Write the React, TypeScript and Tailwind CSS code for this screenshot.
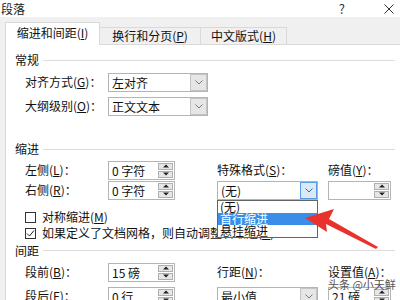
import React from 'react';

const Acc = ({ k }: { k: string }) => (
  <span>
    (<span className="underline underline-offset-1">{k}</span>)
  </span>
);

const Label = ({ text, k }: { text: string; k: string }) => (
  <span className="whitespace-nowrap leading-[14px]">
    {text}
    <Acc k={k} />：
  </span>
);

const Chevron = ({ color }: { color: string }) => (
  <svg width="8" height="5" viewBox="0 0 8 5">
    <path d="M0.5 0.5 L4 4 L7.5 0.5" fill="none" stroke={color} strokeWidth="1" />
  </svg>
);

const Select = ({ value, width, active = false }: { value: string; width: string; active?: boolean }) => (
  <div className={`flex h-[19px] ${width} border border-[#b4b4b4] bg-white`}>
    <span className="flex-1 pl-[3px] leading-[17px] whitespace-nowrap">{value}</span>
    <span
      className={`flex w-[17px] items-center justify-center border ${
        active ? 'border-[#569de5] bg-[#dbe9f7]' : 'border-[#c4c4c4] bg-[#e6e6e6]'
      }`}
    >
      <Chevron color={active ? '#3c6a9c' : '#7a7a7a'} />
    </span>
  </div>
);

const Tri = ({ up }: { up: boolean }) => (
  <svg width="6" height="4" viewBox="0 0 6 4">
    <path d={up ? 'M0 3.5 L3 0.5 L6 3.5 Z' : 'M0 0.5 L3 3.5 L6 0.5 Z'} fill="#222" />
  </svg>
);

const Spin = ({ value, width }: { value: string; width: string }) => (
  <div className={`flex h-[19px] ${width} border border-[#b4b4b4] bg-white`}>
    <span className="flex-1 pl-[3px] leading-[17px] whitespace-pre">{value}</span>
    <span className="flex w-[16px] flex-col gap-px py-px pr-px">
      <span className="flex flex-1 items-center justify-center border border-[#b0b0b0] bg-[#e6e6e6]">
        <Tri up />
      </span>
      <span className="flex flex-1 items-center justify-center border border-[#b0b0b0] bg-[#e6e6e6]">
        <Tri up={false} />
      </span>
    </span>
  </div>
);

const Check = ({ checked = false }: { checked?: boolean }) => (
  <span className="flex h-[11px] w-[11px] items-center justify-center border border-[#333] bg-white">
    {checked && (
      <svg width="9" height="9" viewBox="0 0 9 9">
        <path d="M1 4.5 L3.5 7 L8 1.5" fill="none" stroke="#222" strokeWidth="1" />
      </svg>
    )}
  </span>
);

const Group = ({ title, h }: { title: string; h: string }) => (
  <div className={`flex ${h} items-center pl-[9px] pr-[5px]`}>
    <span className="leading-[14px]">{title}</span>
    <div className="ml-[4px] h-px flex-1 bg-[#dcdcdc]" />
  </div>
);

export default function App() {
  return (
    <div className="relative flex h-[300px] w-[400px] flex-col overflow-hidden bg-[#f0f0f0] font-['Noto_Sans_CJK_SC',sans-serif] text-[12px] text-[#111]">
      {/* title bar */}
      <div className="flex h-[17px] shrink-0 items-center bg-white">
        <span className="pl-[1px] leading-[17px] text-[#222]">段落</span>
        <span className="ml-auto text-[13px] leading-[17px] text-[#333]">?</span>
        <svg className="ml-[39px] mr-[6px]" width="10" height="10" viewBox="0 0 10 10">
          <path d="M0.5 0.5 L9.5 9.5 M9.5 0.5 L0.5 9.5" stroke="#333" strokeWidth="1" />
        </svg>
      </div>

      {/* tabs */}
      <div className="flex h-[27px] shrink-0 items-end pl-[5px]">
        <div className="relative z-10 -mb-px flex h-[23px] w-[95px] items-center justify-center border border-b-0 border-[#d9d9d9] bg-white pb-[2px]">
          缩进和间距<Acc k="I" />
        </div>
        <div className="flex h-[17px] w-[101px] items-center justify-center border-r border-t border-[#d9d9d9]">
          换行和分页<Acc k="P" />
        </div>
        <div className="flex h-[17px] w-[86px] items-center justify-center border-r border-t border-[#d9d9d9]">
          中文版式<Acc k="H" />
        </div>
      </div>

      {/* page */}
      <div className="ml-[5px] flex flex-1 flex-col border-l border-t border-[#d9d9d9] bg-white pt-[5px]">
        <Group title="常规" h="h-[20px]" />
        <div className="flex h-[24px] items-center pl-[19px]">
          <span className="w-[83px]">
            <Label text="对齐方式" k="G" />
          </span>
          <Select value="左对齐" width="w-[100px]" />
        </div>
        <div className="flex h-[24px] items-center pl-[19px]">
          <span className="w-[83px]">
            <Label text="大纲级别" k="O" />
          </span>
          <Select value="正文文本" width="w-[100px]" />
        </div>

        <div className="mt-[21px]">
          <Group title="缩进" h="h-[20px]" />
        </div>
        <div className="mt-px grid grid-cols-[83px_109px_111px_1fr] grid-rows-[20px_20px] items-center pl-[19px]">
          <Label text="左侧" k="L" />
          <Spin value="0 字符" width="w-[67px]" />
          <Label text="特殊格式" k="S" />
          <Label text="磅值" k="Y" />
          <Label text="右侧" k="R" />
          <Spin value="0 字符" width="w-[67px]" />
          <Select value="(无)" width="w-[101px]" active />
          <Spin value="" width="w-[63px]" />
        </div>

        <div className="mt-[9px] flex h-[16px] items-center gap-[6px] pl-[19px]">
          <Check />
          <span className="leading-[14px]">
            对称缩进<Acc k="M" />
          </span>
        </div>
        <div className="flex h-[16px] items-center gap-[6px] pl-[19px]">
          <Check checked />
          <span className="whitespace-nowrap leading-[14px]">
            如果定义了文档网格，则自动调整右缩进<Acc k="D" />
          </span>
        </div>

        <Group title="间距" h="h-[19px]" />
        <div className="grid grid-cols-[83px_109px_111px_1fr] grid-rows-[24px_24px] items-center pl-[19px]">
          <Label text="段前" k="B" />
          <Spin value="15 磅" width="w-[67px]" />
          <Label text="行距" k="N" />
          <Label text="设置值" k="A" />
          <Label text="段后" k="F" />
          <Spin value="0 行" width="w-[67px]" />
          <Select value="最小值" width="w-[101px]" />
          <Spin value="21 磅" width="w-[63px]" />
        </div>
      </div>

      {/* open dropdown list */}
      <div className="absolute left-[217px] top-[200px] z-20 flex w-[101px] flex-col border border-[#646464] bg-white">
        <div className="h-[12px] pl-[2px] leading-[12px]">(无)</div>
        <div className="h-[12px] bg-[#3b8ee8] pl-[2px] leading-[12px] text-white">首行缩进</div>
        <div className="h-[12px] pl-[2px] leading-[12px]">悬挂缩进</div>
      </div>

      {/* red annotation arrow */}
      <svg className="pointer-events-none absolute left-0 top-0 z-30" width="400" height="300" viewBox="0 0 400 300">
        <polygon points="305,218 334,209 329,219 378,247 376,249 326,224 327,232" fill="#e8332c" />
      </svg>

      {/* watermark */}
      <div className="absolute left-[328px] top-[279px] z-30 whitespace-nowrap text-[11px] leading-[11px] text-[#555]">
        头条 @小天鲜
      </div>
    </div>
  );
}
